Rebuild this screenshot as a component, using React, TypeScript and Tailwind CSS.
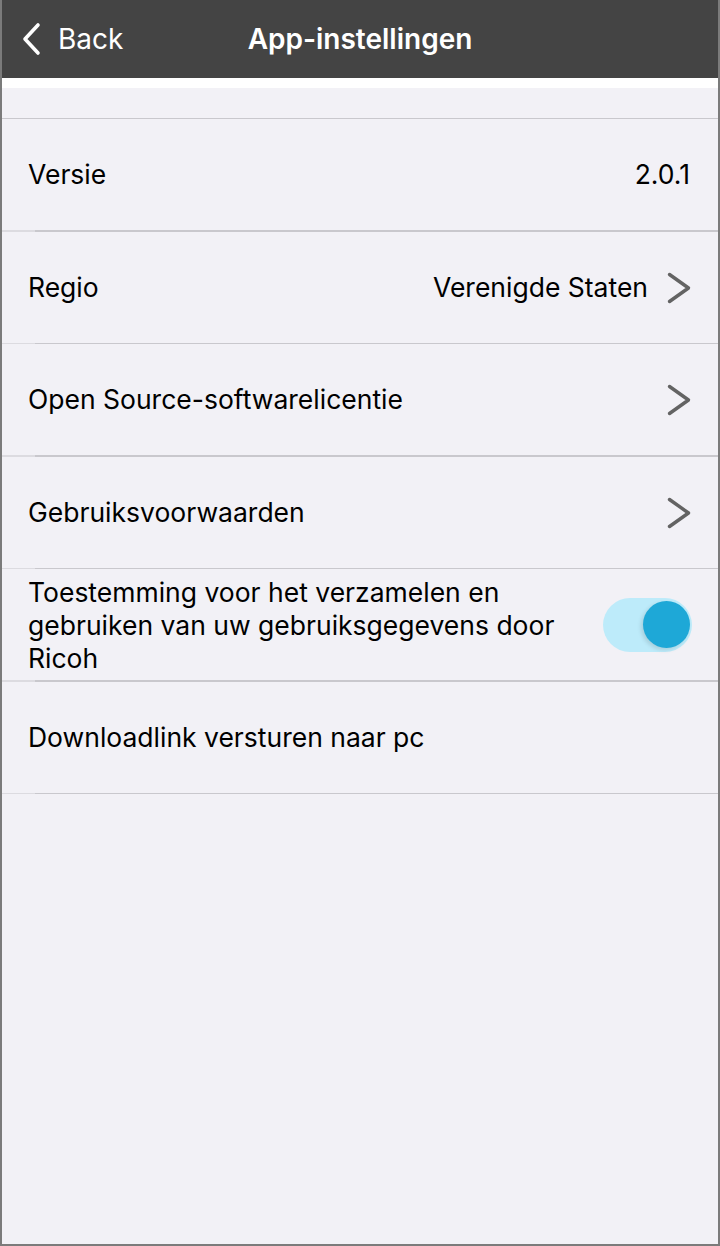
import React from "react";

const font = { fontFamily: "Inter, 'Noto Sans', sans-serif" };

function Chevron() {
  return (
    <svg width="26" height="32" viewBox="0 0 26 32" className="shrink-0 -mr-[2px]">
      <path d="M3.5 2.5 L22.5 16 L3.5 29.5" fill="none" stroke="#636363" strokeWidth="3.4" strokeLinecap="round" strokeLinejoin="round" />
    </svg>
  );
}

function Row({ children }: { children: React.ReactNode }) {
  return (
    <div className="relative h-[112.5px] flex items-center pl-[26px] pr-[28px]">
      {children}
      <div className="absolute left-0 right-0 bottom-0 h-[1.5px] flex">
        <div className="w-[33px] bg-[#dcdbe0]" />
        <div className="flex-1 bg-[#c9c8cd]" />
      </div>
    </div>
  );
}

export default function App() {
  return (
    <div className="w-[720px] h-[1246px] bg-[#f2f1f6] flex flex-col border-l-2 border-r-2 border-b-2 border-[#7b7b7b] box-border overflow-hidden" style={font}>
      <div className="h-[78px] bg-[#444444] relative flex items-center justify-center shrink-0">
        <div className="absolute left-[18px] top-0 h-full flex items-center gap-[14px]">
          <svg width="24" height="34" viewBox="0 0 24 34">
            <path d="M18 3 L5 17 L18 31" fill="none" stroke="#ffffff" strokeWidth="3.6" strokeLinecap="round" strokeLinejoin="round" />
          </svg>
          <span className="text-white text-[28px] leading-none">Back</span>
        </div>
        <span className="text-white text-[28px] font-semibold leading-none">App-instellingen</span>
      </div>
      <div className="h-[10px] bg-white shrink-0" />
      <div className="h-[31px] relative shrink-0">
        <div className="absolute left-0 right-0 bottom-0 h-[1.5px] bg-[#c9c8cd]" />
      </div>
      <Row>
        <span className="text-[26.5px] text-black flex-1">Versie</span>
        <span className="text-[26.5px] text-black">2.0.1</span>
      </Row>
      <Row>
        <span className="text-[26.5px] text-black flex-1">Regio</span>
        <span className="text-[26.5px] text-black mr-[18px]">Verenigde Staten</span>
        <Chevron />
      </Row>
      <Row>
        <span className="text-[26.5px] text-black flex-1">Open Source-softwarelicentie</span>
        <Chevron />
      </Row>
      <Row>
        <span className="text-[26.5px] text-black flex-1">Gebruiksvoorwaarden</span>
        <Chevron />
      </Row>
      <Row>
        <span className="text-[26.5px] leading-[33px] text-black flex-1 pr-[30px]">
          Toestemming voor het verzamelen en gebruiken van uw gebruiksgegevens door Ricoh
        </span>
        <div className="relative w-[89px] h-[54px] rounded-full bg-[#bdebfa] shrink-0 -mr-[2px]">
          <div className="absolute right-[2px] top-[3px] w-[47px] h-[47px] rounded-full bg-[#1ea8d7] shadow-[-2px_2px_4px_rgba(0,0,0,0.12)]" />
        </div>
      </Row>
      <Row>
        <span className="text-[26.5px] text-black flex-1">Downloadlink versturen naar pc</span>
      </Row>
      <div className="flex-1" />
    </div>
  );
}
